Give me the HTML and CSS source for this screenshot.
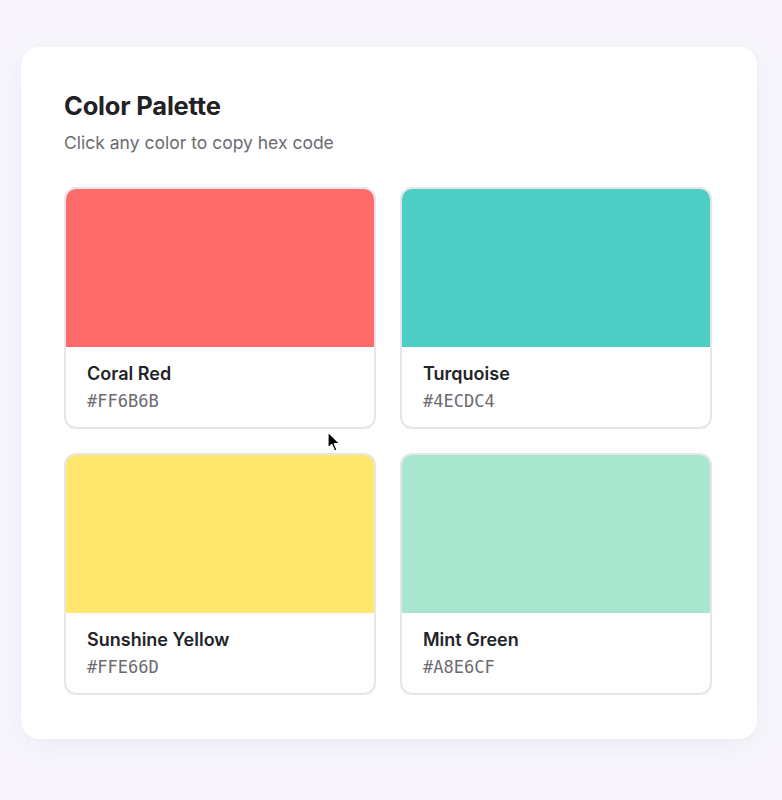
FILE: index.html
```html
<!DOCTYPE html>
<html lang="en">
<head>
<meta charset="utf-8">
<title>Color Palette</title>
<link rel="stylesheet" href="styles.css">
</head>
<body>
<main class="palette">
  <h1 class="title">Color Palette</h1>
  <p class="subtitle">Click any color to copy hex code</p>
  <div class="grid">
    <div class="swatch">
      <div class="chip chip-coral"></div>
      <div class="info"><div class="name">Coral Red</div><div class="hex">#FF6B6B</div></div>
    </div>
    <div class="swatch">
      <div class="chip chip-turq"></div>
      <div class="info"><div class="name">Turquoise</div><div class="hex">#4ECDC4</div></div>
    </div>
    <div class="swatch">
      <div class="chip chip-yellow"></div>
      <div class="info"><div class="name">Sunshine Yellow</div><div class="hex">#FFE66D</div></div>
    </div>
    <div class="swatch">
      <div class="chip chip-mint"></div>
      <div class="info"><div class="name">Mint Green</div><div class="hex">#A8E6CF</div></div>
    </div>
  </div>
</main>
<svg class="cursor" width="14" height="22" viewBox="0 0 14 22" aria-hidden="true">
  <path d="M1 1 L1 17 L4.8 13.4 L7.6 20 L10 19 L7.3 12.6 L12.6 12.6 Z" fill="#000" stroke="#fff" stroke-width="1.2" stroke-linejoin="round"/>
</svg>
</body>
</html>
```
FILE: styles.css
```css
html, body {
  margin: 0;
  padding: 0;
}
body {
  background: #f8f6fc;
  font-family: Inter, "Noto Sans", sans-serif;
  width: 782px;
  height: 800px;
  position: relative;
  overflow: hidden;
}
.palette {
  box-sizing: border-box;
  width: 736px;
  margin: 47px 0 0 21px;
  padding: 43px 45px 44px 43px;
  background: #ffffff;
  border-radius: 18px;
  box-shadow: 0 6px 24px rgba(120, 100, 170, 0.08), 0 1px 3px rgba(0, 0, 0, 0.03);
}
.title {
  margin: 0;
  font-size: 25.5px;
  line-height: 32px;
  font-weight: 700;
  color: #1f2125;
  letter-spacing: -0.2px;
}
.subtitle {
  margin: 9px 0 0;
  font-size: 17.5px;
  line-height: 24px;
  color: #6b6b70;
}
.grid {
  margin-top: 32px;
  display: grid;
  grid-template-columns: 1fr 1fr;
  gap: 24px;
}
.swatch {
  border: 2px solid #e6e6e8;
  border-radius: 12px;
  overflow: hidden;
  background: #fff;
}
.chip {
  height: 158px;
}
.chip-coral { background: #ff6b6b; }
.chip-turq { background: #4ecdc4; }
.chip-yellow { background: #ffe66d; }
.chip-mint { background: #a8e6cf; }
.info {
  padding: 15px 21px 15px;
}
.name {
  font-size: 18px;
  line-height: 24px;
  font-weight: 600;
  color: #222428;
}
.hex {
  margin-top: 4px;
  font-family: "DejaVu Sans Mono", "Liberation Mono", monospace;
  font-size: 17px;
  line-height: 22px;
  color: #6b6b70;
}
.cursor {
  position: absolute;
  left: 327px;
  top: 431px;
}
```
